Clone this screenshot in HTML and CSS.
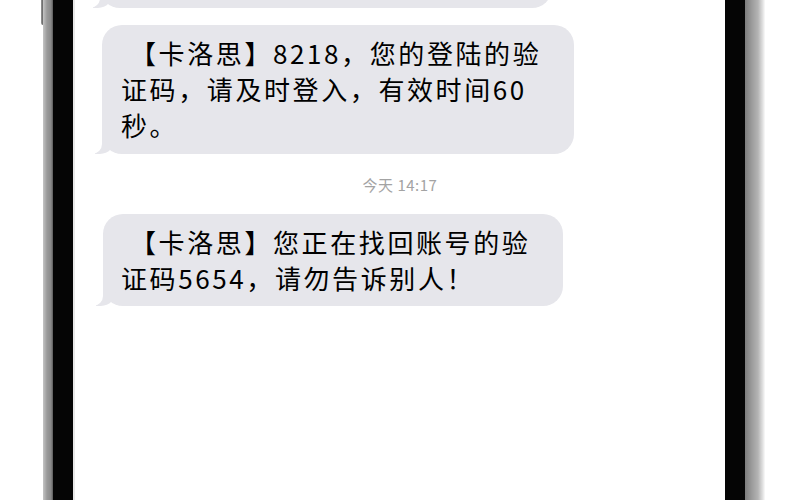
FILE: index.html
```html
<!DOCTYPE html>
<html lang="zh-CN">
<head>
<meta charset="utf-8">
<title>短信</title>
<link rel="stylesheet" href="styles.css">
</head>
<body>
  <div class="gutter gutter--left"><span class="side-btn"></span></div>
  <div class="rail rail--left"></div>
  <div class="bezel"></div>
  <main class="screen">
    <div class="bubble bubble--partial"></div>
    <div class="bubble bubble--a">
      <p class="msg">【卡洛思】8218，您的登陆的验<br>证码，请及时登入，有效时间60<br>秒。</p>
    </div>
    <div class="stamp">今天 14:17</div>
    <div class="bubble bubble--b">
      <p class="msg">【卡洛思】您正在找回账号的验<br>证码5654，请勿告诉别人！</p>
    </div>
  </main>
  <div class="bezel bezel--right"></div>
  <div class="rail rail--right"></div>
  <div class="gutter gutter--right"></div>
</body>
</html>
```
FILE: styles.css
```css
html, body {
  margin: 0;
  padding: 0;
}
body {
  width: 800px;
  height: 500px;
  overflow: hidden;
  background: #ffffff;
  display: flex;
  font-family: "Noto Sans CJK SC", "Noto Sans", sans-serif;
}
.gutter--left {
  width: 43px;
  display: flex;
  justify-content: flex-end;
  align-items: flex-start;
}
.side-btn {
  width: 4px;
  height: 25px;
  margin-right: -2px;
  background: linear-gradient(to right, #9a9a9a, #2a2a2a);
  border-radius: 0 0 2px 2px;
}
.rail--left {
  width: 10px;
  background: linear-gradient(to right, #c4c4c4, #9a9a9a 40%, #8a8a8a 80%, #5a5a5a);
}
.bezel {
  width: 20px;
  background: #050505;
}
.screen {
  width: 652px;
  box-sizing: border-box;
  padding: 0 27px;
  border-left: 2px solid #e8e8e8;
  display: flex;
  flex-direction: column;
  align-items: flex-start;
  background: #ffffff;
}
.rail--right {
  width: 20px;
  background: linear-gradient(to right, #7c7c7c, #9c9c9c 35%, #b4b4b4 65%, #e4e4e4 90%, #fbfbfb);
}
.gutter--right {
  flex: 1;
}

.bubble {
  position: relative;
  box-sizing: border-box;
  background: #e6e6eb;
  border-radius: 20px;
}
.bubble::before {
  content: "";
  position: absolute;
  bottom: 0;
  left: -7px;
  width: 20px;
  height: 20px;
  background: #e6e6eb;
  border-bottom-right-radius: 15px;
}
.bubble::after {
  content: "";
  position: absolute;
  bottom: 0;
  left: -10px;
  width: 10px;
  height: 20px;
  background: #ffffff;
  border-bottom-right-radius: 10px;
}
.bubble--partial {
  width: 452px;
  height: 60px;
  margin-top: -52px;
  margin-left: -2px;
}
.bubble--a {
  width: 472px;
  margin-top: 17px;
  padding: 10px 20px 11px 19px;
}
.bubble--b {
  width: 460px;
  margin-left: 1px;
  padding: 10px 20px 10px 18px;
}
.msg {
  position: relative;
  z-index: 1;
  margin: 0;
  font-size: 26px;
  font-weight: 400;
  line-height: 36px;
  letter-spacing: 2.6px;
  text-indent: 9px;
  color: #000000;
  white-space: nowrap;
}
.stamp {
  align-self: center;
  margin: 21px 0 19px;
  font-size: 15px;
  line-height: 20px;
  color: #a3a3a3;
  letter-spacing: 0.5px;
}
```
